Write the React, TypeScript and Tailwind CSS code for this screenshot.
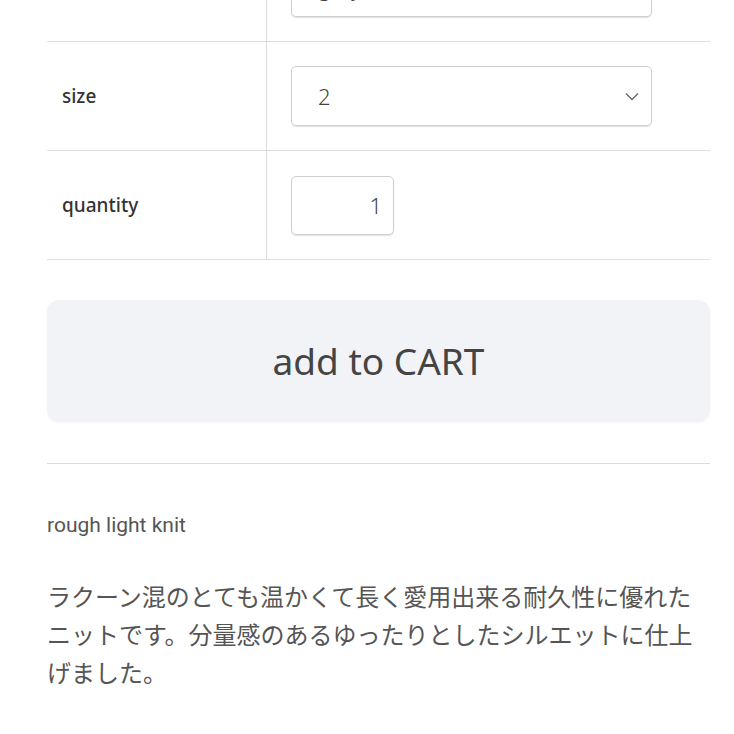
import React, { useState } from 'react';

const SANS = "font-['Noto_Sans','Open_Sans','Noto_Sans_CJK_JP',sans-serif]";

const Chevron: React.FC = () => (
  <svg width="14" height="9" viewBox="0 0 14 9" fill="none" className="shrink-0">
    <path d="M1 1.5L7 7.5L13 1.5" stroke="#666" strokeWidth="1.3" />
  </svg>
);

const Row: React.FC<{ label?: string; children: React.ReactNode; first?: boolean }> = ({ label, children, first }) => (
  <div className={`flex h-[109px] border-b border-[#dedede] ${first ? '-mt-[67px]' : ''}`}>
    <div className="w-[220px] shrink-0 border-r border-[#dedede] flex items-center pl-[15px] text-[19px] font-medium text-[#333]">
      {label}
    </div>
    <div className="flex-1 flex items-center pl-[24px]">{children}</div>
  </div>
);

const App: React.FC = () => {
  const [size, setSize] = useState('2');
  const [qty, setQty] = useState('1');

  return (
    <div className={`w-[734px] h-[734px] overflow-hidden bg-white ${SANS}`}>
      <div className="mx-[47px] w-[663px]">
        <Row first>
          <div className="w-[361px] h-[60px] rounded-[5px] border border-[#cfcfcf] shadow-[0_1px_1px_rgba(0,0,0,0.12)] flex items-center justify-between pl-[26px] pr-[12px] text-[22px] font-light text-[#444]">
            <span>gray</span>
            <Chevron />
          </div>
        </Row>
        <Row label="size">
          <div className="relative w-[361px] h-[60px] rounded-[5px] border border-[#cfcfcf] shadow-[0_1px_1px_rgba(0,0,0,0.12)] flex items-center justify-between pl-[26px] pr-[12px] text-[22px] font-light text-[#444]">
            <span>{size}</span>
            <Chevron />
            <select
              value={size}
              onChange={(e) => setSize(e.target.value)}
              className="absolute inset-0 opacity-0 cursor-pointer"
            >
              <option value="1">1</option>
              <option value="2">2</option>
              <option value="3">3</option>
            </select>
          </div>
        </Row>
        <Row label="quantity">
          <input
            type="text"
            value={qty}
            onChange={(e) => setQty(e.target.value)}
            className="w-[103px] h-[59px] rounded-[5px] border border-[#cfcfcf] shadow-[0_1px_1px_rgba(0,0,0,0.12)] text-right pr-[11px] text-[22px] font-light text-[#444] outline-none"
          />
        </Row>

        <button className="mt-[40px] w-full h-[122px] rounded-[12px] bg-[#f1f3f6] shadow-[0_1px_3px_rgba(0,0,0,0.04)] text-[37px] text-[#444]">
          add to CART
        </button>

        <div className="mt-[41px] border-t border-[#dcdcdc]" />

        <p className="mt-[49px] text-[21px] leading-[24px] text-[#555] font-['Roboto','Liberation_Sans',sans-serif]">
          rough light knit
        </p>

        <p className="mt-[40px] text-[24px] leading-[38px] text-[#555] font-['Noto_Sans_CJK_JP',sans-serif]">
          ラクーン混のとても温かくて長く愛用出来る耐久性に優れたニットです。分量感のあるゆったりとしたシルエットに仕上げました。
        </p>
      </div>
    </div>
  );
};

export default App;
